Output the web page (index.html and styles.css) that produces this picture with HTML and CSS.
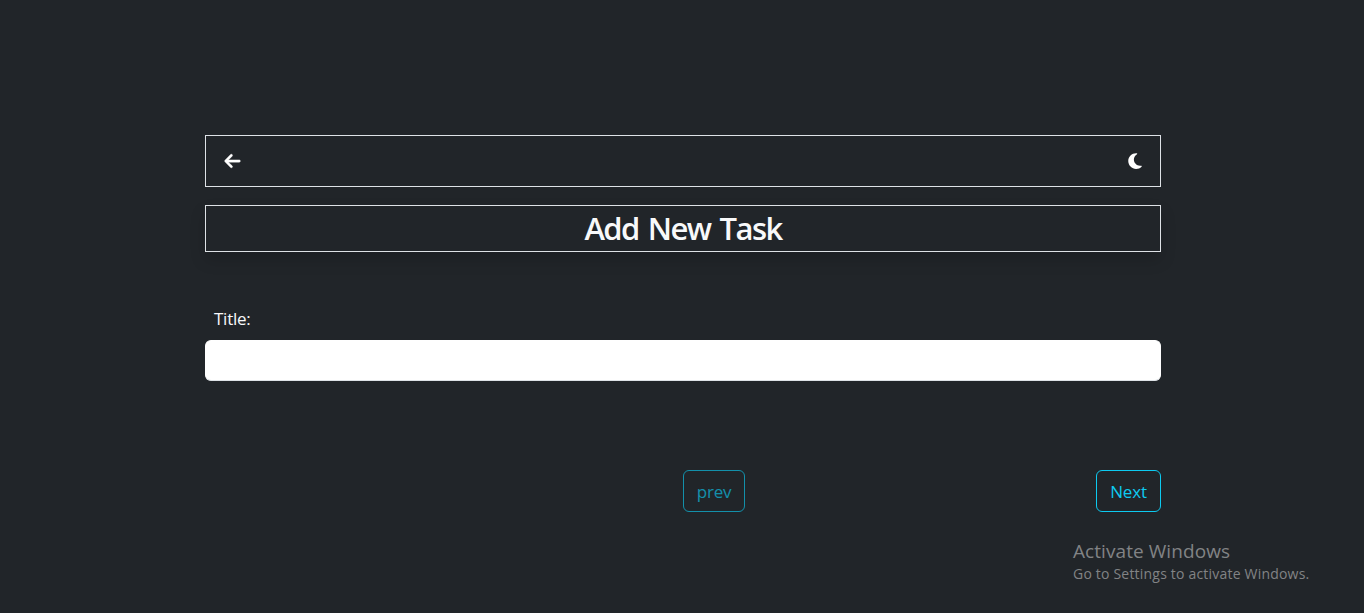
FILE: index.html
```html
<!DOCTYPE html>
<html lang="en">
<head>
<meta charset="utf-8">
<title>Add New Task</title>
<link rel="stylesheet" href="styles.css">
</head>
<body>
<main class="container">
  <nav class="toolbar">
    <svg class="icon-back" viewBox="0 0 448 512" aria-label="Back"><path fill="currentColor" stroke="currentColor" stroke-width="12" d="M9.400 233.400c-12.500 12.500-12.500 32.800 0 45.300l160 160c12.500 12.500 32.800 12.500 45.300 0s12.500-32.800 0-45.300L109.200 288H416c17.700 0 32-14.300 32-32s-14.300-32-32-32H109.300L214.600 118.600c12.500-12.500 12.500-32.800 0-45.300s-32.800-12.500-45.300 0l-160 160z"/></svg>
    <svg class="icon-moon" viewBox="0 0 384 512" aria-label="Dark mode"><path fill="currentColor" d="M223.500 32C100 32 0 132.300 0 256s100 224 223.500 224c60.600 0 115.500-24.200 155.800-63.400 5-4.900 6.300-12.500 3.100-18.700s-10.100-9.700-17-8.500c-9.800 1.700-19.800 2.600-30.100 2.600-96.900 0-175.500-78.800-175.500-176 0-65.800 36-123.100 89.300-153.300 6.100-3.500 9.200-10.500 7.700-17.300s-7.300-11.900-14.300-12.500c-6.300-.5-12.600-.8-19-.8z"/></svg>
  </nav>
  <h1 class="heading">Add New Task</h1>
  <form class="task-form">
    <label class="field-label" for="title">Title:</label>
    <input class="field-input" id="title" type="text">
    <div class="actions">
      <button class="btn btn-prev" type="button" disabled>prev</button>
      <button class="btn btn-next" type="button">Next</button>
    </div>
  </form>
</main>
<aside class="watermark">
  <div class="watermark-title">Activate Windows</div>
  <div class="watermark-text">Go to Settings to activate Windows.</div>
</aside>
</body>
</html>
```
FILE: styles.css
```css
* { box-sizing: border-box; }

body {
  margin: 0;
  height: 613px;
  overflow: hidden;
  background: #212529;
  color: #f8f9fa;
  font-family: "Open Sans", "Noto Sans", sans-serif;
}

.container {
  width: 956px;
  margin: 0 0 0 205px;
  padding-top: 135px;
}

.toolbar {
  display: flex;
  align-items: center;
  justify-content: space-between;
  height: 52px;
  padding: 0 18px;
  border: 1px solid #dee2e6;
  color: #fff;
}

.icon-back { width: 17px; height: 18px; overflow: visible; }
.icon-moon { width: 14px; height: 18px; overflow: visible; }

.heading {
  height: 47px;
  margin: 18px 0 0;
  border: 1px solid #dee2e6;
  box-shadow: 0 8px 16px rgba(0, 0, 0, 0.15);
  font-size: 31px;
  font-weight: 600;
  letter-spacing: -1.6px;
  word-spacing: 2.7px;
  line-height: 45px;
  text-align: center;
}

.task-form { padding-top: 52px; }

.field-label {
  display: block;
  height: 36px;
  padding-left: 9px;
  font-size: 17px;
  letter-spacing: -0.25px;
  line-height: 30px;
}

.field-input {
  display: block;
  width: 100%;
  height: 41px;
  padding: 6px 12px;
  border: 1px solid #fff;
  border-bottom-color: #dee2e6;
  border-radius: 6px;
  background: #fff;
  font: inherit;
}

.actions {
  display: flex;
  justify-content: space-between;
  margin-top: 89px;
  padding-left: 478px;
}

.btn {
  height: 42px;
  padding: 2px 0 0;
  border: 1px solid #0dcaf0;
  border-radius: 6px;
  background: transparent;
  color: #0dcaf0;
  font-family: inherit;
  font-size: 17px;
  letter-spacing: -0.2px;
  line-height: 38px;
}

.btn-prev { width: 62px; opacity: 0.65; }
.btn-next { width: 65px; }

/* System notice floating over the page */
.watermark {
  position: absolute;
  left: 1073px;
  top: 539px;
  color: #818385;
  white-space: nowrap;
}

.watermark-title { font-size: 19px; letter-spacing: 0.07px; line-height: 24px; }
.watermark-text { font-size: 14px; letter-spacing: 0.2px; line-height: 22px; }
```
